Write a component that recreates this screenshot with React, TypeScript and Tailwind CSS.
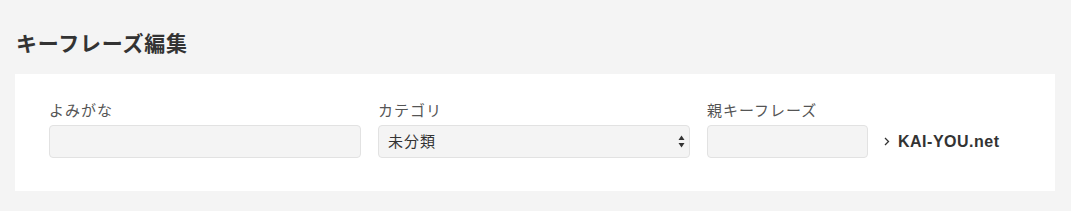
export default function App() {
  return (
    <div className="min-h-[211px] bg-[#f4f4f4] px-[15px] pt-[27px] pb-[20px] font-['Noto_Sans_CJK_JP','Noto_Sans',sans-serif]">
      <h1 className="mb-[17px] pl-[1px] text-[21px] leading-[30px] font-bold tracking-[0.75px] text-[#333]">
        キーフレーズ編集
      </h1>

      <div className="w-[1040px] bg-white px-[34px] pt-[26px] pb-[33px]">
        <div className="flex items-end">
          <div className="w-[312px]">
            <label className="mb-[5px] block text-[15px] leading-[20px] tracking-[1px] text-[#555]">
              よみがな
            </label>
            <input
              type="text"
              className="h-[33px] w-full rounded-[4px] border border-[#e2e2e2] bg-[#f4f4f4] px-3 text-[15px] text-[#333] focus:outline-none"
            />
          </div>

          <div className="ml-[17px] w-[312px]">
            <label className="mb-[5px] block text-[15px] leading-[20px] tracking-[1px] text-[#555]">
              カテゴリ
            </label>
            <div className="relative">
              <select className="h-[33px] w-full appearance-none rounded-[4px] border border-[#e2e2e2] bg-[#f4f4f4] px-[9px] text-[15px] tracking-[1px] text-[#333] focus:outline-none">
                <option>未分類</option>
              </select>
              <svg
                className="pointer-events-none absolute top-[10px] right-[5px]"
                width="7"
                height="13"
                viewBox="0 0 7 13"
              >
                <path d="M3.5 0.5 L6.5 5 L0.5 5 Z" fill="#333" />
                <path d="M0.5 8 L6.5 8 L3.5 12.5 Z" fill="#333" />
              </svg>
            </div>
          </div>

          <div className="ml-[17px] w-[161px]">
            <label className="mb-[5px] block text-[15px] leading-[20px] tracking-[1px] text-[#555]">
              親キーフレーズ
            </label>
            <input
              type="text"
              className="h-[33px] w-full rounded-[4px] border border-[#e2e2e2] bg-[#f4f4f4] px-3 text-[15px] text-[#333] focus:outline-none"
            />
          </div>

          <a
            href="#"
            className="ml-[16px] flex h-[33px] items-center gap-[8px] font-['Liberation_Sans',Arial,sans-serif] text-[16px] font-bold tracking-[0.5px] text-[#333]"
          >
            <svg width="6" height="9" viewBox="0 0 6 9">
              <path d="M1 1 L4.5 4.5 L1 8" fill="none" stroke="#333" strokeWidth="1.3" />
            </svg>
            KAI-YOU.net
          </a>
        </div>
      </div>
    </div>
  );
}
